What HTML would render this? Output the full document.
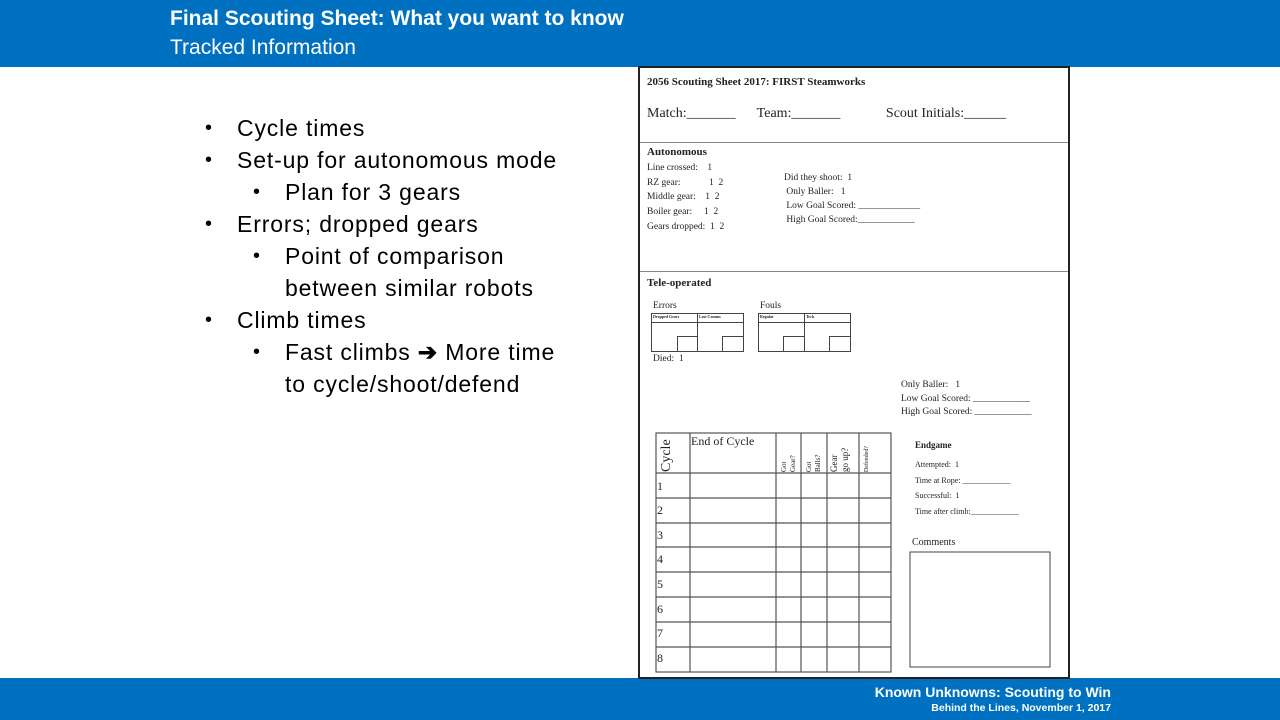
<!DOCTYPE html>
<html><head><meta charset="utf-8"><style>
*{margin:0;padding:0;box-sizing:border-box}
body{width:1280px;height:720px;position:relative;background:#fff;overflow:hidden;font-family:"Liberation Sans",sans-serif}
.a{position:absolute;white-space:nowrap}
.s{font-family:"Liberation Serif",serif;color:#222}
.b{font-size:23px;color:#000;letter-spacing:0.85px}
.d{position:absolute;font-size:20px;color:#000}
.ln{position:absolute;background:#444}
</style></head><body>
<div class="a" style="left:0;top:0;width:1280px;height:67px;background:#0070c0"></div>
<div class="a" style="left:170px;top:7px;color:#fff;font-weight:bold;font-size:21px">Final Scouting Sheet: What you want to know</div>
<div class="a" style="left:170px;top:36px;color:#fff;font-size:21px">Tracked Information</div>
<div class="a" style="left:0;top:678px;width:1280px;height:42px;background:#0070c0"></div>
<div class="a" style="left:0;top:684px;width:1111px;text-align:right;color:#fff;font-weight:bold;font-size:14px">Known Unknowns: Scouting to Win</div>
<div class="a" style="left:0;top:702px;width:1111px;text-align:right;color:#fff;font-weight:bold;font-size:10.5px">Behind the Lines, November 1, 2017</div>

<div class="d" style="left:205px;top:117px">•</div><div class="a b" style="left:237px;top:115px">Cycle times</div>
<div class="d" style="left:205px;top:149px">•</div><div class="a b" style="left:237px;top:147px">Set-up for autonomous mode</div>
<div class="d" style="left:253px;top:181px">•</div><div class="a b" style="left:285px;top:179px">Plan for 3 gears</div>
<div class="d" style="left:205px;top:213px">•</div><div class="a b" style="left:237px;top:211px">Errors; dropped gears</div>
<div class="d" style="left:253px;top:245px">•</div><div class="a b" style="left:285px;top:243px">Point of comparison</div>
<div class="a b" style="left:285px;top:275px">between similar robots</div>
<div class="d" style="left:205px;top:309px">•</div><div class="a b" style="left:237px;top:307px">Climb times</div>
<div class="d" style="left:253px;top:341px">•</div><div class="a b" style="left:285px;top:339px">Fast climbs <b>➔</b> More time</div>
<div class="a b" style="left:285px;top:371px">to cycle/shoot/defend</div>

<div class="a" style="left:638px;top:66px;width:432px;height:613px;border:2px solid #222;background:#fff"></div>
<div class="a s" style="left:647px;top:76px;font-size:11px;font-weight:bold">2056 Scouting Sheet 2017: FIRST Steamworks</div>
<div class="a s" style="left:647px;top:106px;font-size:14px">Match:_______&nbsp;&nbsp;&nbsp;&nbsp;&nbsp;&nbsp;Team:_______&nbsp;&nbsp;&nbsp;&nbsp;&nbsp;&nbsp;&nbsp;&nbsp;&nbsp;&nbsp;&nbsp;&nbsp;&nbsp;Scout Initials:______</div>
<div class="ln" style="left:640px;top:142px;width:428px;height:1px;background:#888"></div>
<div class="a s" style="left:647px;top:146px;font-size:11px;font-weight:bold">Autonomous</div>
<div class="a s" style="left:647px;top:161px;font-size:9.5px;line-height:14.7px">Line crossed:&nbsp;&nbsp;&nbsp;&nbsp;1<br>RZ gear:&nbsp;&nbsp;&nbsp;&nbsp;&nbsp;&nbsp;&nbsp;&nbsp;&nbsp;&nbsp;&nbsp;&nbsp;1&nbsp;&nbsp;2<br>Middle gear:&nbsp;&nbsp;&nbsp;&nbsp;1&nbsp;&nbsp;2<br>Boiler gear:&nbsp;&nbsp;&nbsp;&nbsp;&nbsp;1&nbsp;&nbsp;2<br>Gears dropped:&nbsp;&nbsp;1&nbsp;&nbsp;2</div>
<div class="a s" style="left:784px;top:171px;font-size:9.5px;line-height:14px">Did they shoot:&nbsp;&nbsp;1<br>&nbsp;Only Baller:&nbsp;&nbsp;&nbsp;1<br>&nbsp;Low Goal Scored: _____________<br>&nbsp;High Goal Scored:____________</div>
<div class="ln" style="left:640px;top:271px;width:428px;height:1px;background:#888"></div>
<div class="a s" style="left:647px;top:277px;font-size:11px;font-weight:bold">Tele-operated</div>
<div class="a s" style="left:653px;top:301px;font-size:9.5px">Errors</div>
<div class="a s" style="left:760px;top:301px;font-size:9.5px">Fouls</div>
<div class="a" style="left:651px;top:313px;width:93px;height:39px;border:1px solid #444"></div>
<div class="ln" style="left:651px;top:322px;width:93px;height:1px"></div>
<div class="ln" style="left:697px;top:313px;width:1px;height:39px"></div>
<div class="a" style="left:677px;top:336px;width:21px;height:16px;border:1px solid #444"></div>
<div class="a" style="left:722px;top:336px;width:22px;height:16px;border:1px solid #444"></div>
<div class="a" style="left:758px;top:313px;width:93px;height:39px;border:1px solid #444"></div>
<div class="ln" style="left:758px;top:322px;width:93px;height:1px"></div>
<div class="ln" style="left:804px;top:313px;width:1px;height:39px"></div>
<div class="a" style="left:783px;top:336px;width:22px;height:16px;border:1px solid #444"></div>
<div class="a" style="left:829px;top:336px;width:22px;height:16px;border:1px solid #444"></div>
<div class="a s" style="left:653px;top:314px;font-size:4px;font-weight:bold">Dropped Gears</div>
<div class="a s" style="left:699px;top:314px;font-size:4px;font-weight:bold">Lost Comms</div>
<div class="a s" style="left:760px;top:314px;font-size:4px;font-weight:bold">Regular</div>
<div class="a s" style="left:806px;top:314px;font-size:4px;font-weight:bold">Tech</div>
<div class="a s" style="left:653px;top:354px;font-size:9.5px">Died:&nbsp;&nbsp;1</div>
<div class="a s" style="left:901px;top:379px;font-size:9.5px;line-height:13.5px">Only Baller:&nbsp;&nbsp;&nbsp;1<br>Low Goal Scored: ____________<br>High Goal Scored: ____________</div>

<svg class="a" style="left:0;top:0" width="1280" height="720">
<g stroke="#555" stroke-width="1.2" fill="none">
<rect x="656" y="433" width="235" height="239"/>
<line x1="656" y1="473" x2="891" y2="473"/>
<line x1="656" y1="498" x2="891" y2="498"/>
<line x1="656" y1="523" x2="891" y2="523"/>
<line x1="656" y1="547" x2="891" y2="547"/>
<line x1="656" y1="572" x2="891" y2="572"/>
<line x1="656" y1="597" x2="891" y2="597"/>
<line x1="656" y1="622" x2="891" y2="622"/>
<line x1="656" y1="647" x2="891" y2="647"/>
<line x1="690" y1="433" x2="690" y2="672"/>
<line x1="776" y1="433" x2="776" y2="672"/>
<line x1="801" y1="433" x2="801" y2="672"/>
<line x1="827" y1="433" x2="827" y2="672"/>
<line x1="859" y1="433" x2="859" y2="672"/>
</g>
<g font-family="Liberation Serif,serif" fill="#222">
<text x="670" y="472" font-size="14" transform="rotate(-90 670 472)">Cycle</text>
<text x="786" y="472" font-size="7" transform="rotate(-90 786 472)">Got</text>
<text x="795" y="472" font-size="7" transform="rotate(-90 795 472)">Gear?</text>
<text x="811" y="472" font-size="7" transform="rotate(-90 811 472)">Got</text>
<text x="820" y="472" font-size="7" transform="rotate(-90 820 472)">Balls?</text>
<text x="837" y="472" font-size="9" transform="rotate(-90 837 472)">Gear</text>
<text x="848" y="472" font-size="9" transform="rotate(-90 848 472)">go up?</text>
<text x="868" y="472" font-size="6" transform="rotate(-90 868 472)">Defended?</text>
<text x="691" y="445" font-size="12">End of Cycle</text>
<g font-size="12"><text x="657" y="490">1</text><text x="657" y="514">2</text><text x="657" y="539">3</text><text x="657" y="563">4</text><text x="657" y="588">5</text><text x="657" y="613">6</text><text x="657" y="637">7</text><text x="657" y="662">8</text></g>
</g>
<rect x="910" y="552" width="140" height="115" stroke="#444" fill="none"/>
</svg>
<div class="a s" style="left:915px;top:440px;font-size:9px;font-weight:bold">Endgame</div>
<div class="a s" style="left:915px;top:457px;font-size:8px;line-height:15.7px">Attempted:&nbsp;&nbsp;1<br>Time at Rope: ____________<br>Successful:&nbsp;&nbsp;1<br>Time after climb:____________</div>
<div class="a s" style="left:912px;top:537px;font-size:10px">Comments</div>
</body></html>
